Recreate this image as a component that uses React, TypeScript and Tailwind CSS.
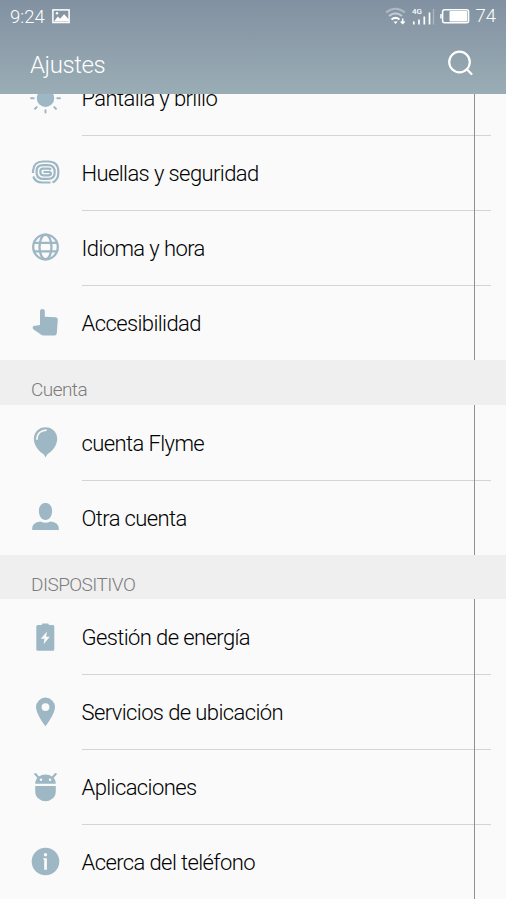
import type { ReactNode } from "react";

interface SettingItem {
  label: string;
  icon: ReactNode;
}

interface SettingSection {
  title?: string;
  titleClass?: string;
  items: SettingItem[];
}

const sections: SettingSection[] = [
  {
    items: [
      {
        label: "Pantalla y brillo",
        icon: (
          <>
            <circle cx="16.5" cy="17.2" r="8.7" fill="currentColor" />
            <path
              d="M2 17.3h2.7M28.3 17.3h2.7M6.1 27.7l1.6-1.6M26.9 27.7l-1.6-1.6M16.5 29.2v2.4M6.1 6.8l1.6 1.6M26.9 6.8l-1.6 1.6M16.5 5.2v-2.4"
              stroke="currentColor"
              strokeWidth="2"
              strokeLinecap="round"
            />
          </>
        ),
      },
      {
        label: "Huellas y seguridad",
        icon: (
          <g fill="none" stroke="currentColor" strokeWidth="2.2">
            <path d="M4 17V15Q4.5 5.5 14 5.5H19Q29.3 5.5 29.3 15.5V17Q29.3 24 23.5 26.5" />
            <path d="M4.2 20.5Q6.500 26.500 13 26.500H21.500" />
            <path d="M7.600 17.500Q8.500 22.900 14 22.900H19Q25.700 22.900 25.700 16.200Q25.700 9.200 19 9.200H14Q7.600 9.200 7.600 15V17.500" />
            <path d="M22 13.800Q21 12.700 19 12.700H14Q11.300 12.700 11.300 15.500Q11.300 19.300 14.500 19.300H19Q22 19.300 22 17.500Q22 16 20 16H14.500" />
          </g>
        ),
      },
      {
        label: "Idioma y hora",
        icon: (
          <g fill="none" stroke="currentColor" strokeWidth="2.3">
            <circle cx="16.5" cy="16" r="12.3" />
            <ellipse cx="16.5" cy="16" rx="6" ry="12.3" />
            <path d="M5.3 11.9h22.4M5.3 20.3h22.4" />
          </g>
        ),
      },
      {
        label: "Accesibilidad",
        icon: (
          <path
            d="M11 19V5.3a2.4 2.4 0 0 1 4.8 0v5.5l11 .5q2 .2 2 2.2l-1 13.8q-.2 2.2-2.3 2.2H14.5q-1.5 0-2.6-1.1L4.6 23.6q-1.3-1.2-.9-2.5.6-1.4 2.5-1.4z"
            fill="currentColor"
          />
        ),
      },
    ],
  },
  {
    title: "Cuenta",
    titleClass: "h-[45px] pb-px",
    items: [
      {
        label: "cuenta Flyme",
        icon: (
          <>
            <path
              d="M16.5 1.2c6.7 0 11.7 4.9 11.7 11.5 0 6.8-4.7 12.3-9.9 15.5l-1.8 3.3-1.8-3.3C9.5 25 4.9 19.5 4.9 12.7 4.9 6.1 9.8 1.2 16.5 1.2z"
              fill="currentColor"
            />
            <path
              d="M7.9 13C8 8 11.5 4.5 17 4.1"
              fill="none"
              stroke="#fafafa"
              strokeWidth="1.8"
              strokeLinecap="round"
            />
          </>
        ),
      },
      {
        label: "Otra cuenta",
        icon: (
          <path
            d="M16.5 2c4 0 6.600 3.100 6.600 8 0 4.800-2.700 9-6.600 9s-6.600-4.200-6.600-9c0-4.900 2.600-8 6.600-8zM3.200 29v-1.500q0-6 8.300-7 2.500 1.200 5 1.200t5-1.200q8.300 1 8.300 7V29z"
            fill="currentColor"
          />
        ),
      },
    ],
  },
  {
    title: "DISPOSITIVO",
    titleClass: "h-[44px]",
    items: [
      {
        label: "Gestión de energía",
        icon: (
          <>
            <path
              d="M8.8 4.9h4V4.5q0-1 1-1h5q1 0 1 1v.4h4q1.5 0 1.5 1.5v22.9q0 1.5-1.5 1.5H8.8q-1.5 0-1.5-1.5V6.4q0-1.5 1.5-1.5z"
              fill="currentColor"
            />
            <path d="M18 11.5l-6.2 7.3h3.7l-.9 5.4 6.2-7.4h-3.7z" fill="#fafafa" />
          </>
        ),
      },
      {
        label: "Servicios de ubicación",
        icon: (
          <path
            fillRule="evenodd"
            d="M16.5 2.6a9.5 9.5 0 0 1 9.5 9.5c0 7-9.5 19.2-9.5 19.2S7 19.1 7 12.1a9.5 9.5 0 0 1 9.500-9.500zm0 5.600a3.900 3.900 0 1 0 0 7.800 3.900 3.900 0 0 0 0-7.800z"
            fill="currentColor"
          />
        ),
      },
      {
        label: "Aplicaciones",
        icon: (
          <>
            <path d="M6.2 13.8q.1-4.600 3.400-7Q12.500 4.500 16.500 4.500t6.900 2.300q3.300 2.400 3.400 7z" fill="currentColor" />
            <path d="M9.500 7.500L6.300 4.100M23.500 7.500l3.200-3.400" stroke="currentColor" strokeWidth="2.2" strokeLinecap="round" />
            <circle cx="12" cy="9.800" r="1.2" fill="#fafafa" />
            <circle cx="21" cy="9.800" r="1.2" fill="#fafafa" />
            <path d="M6.200 16h20.600v5q0 5.700-4 8-2.500 2.300-6.300 2.300t-6.300-2.300q-4-2.300-4-8z" fill="currentColor" />
          </>
        ),
      },
      {
        label: "Acerca del teléfono",
        icon: (
          <>
            <circle cx="16.5" cy="16.5" r="13.8" fill="currentColor" />
            <circle cx="16.5" cy="9.7" r="1.7" fill="#fafafa" />
            <path d="M14.300 13.300h3.600v11.500h-2.700v-10.200h-.9z" fill="#fafafa" />
          </>
        ),
      },
    ],
  },
];

const StatusBar = () => (
  <div className="flex h-8 items-center pl-[10px] pr-[10px] text-[18.5px] leading-8">
    <span className="pt-px">9:24</span>
    <svg className="ml-[7px] h-4 w-[18px]" viewBox="0 0 18 16" fill="none">
      <rect x="0.9" y="1.9" width="16.2" height="12.6" stroke="white" strokeWidth="1.5" />
      <path d="M2 13.5l3.8-5 2.3 2.2 4-4.5 4.7 5v2.3z" fill="white" />
      <circle cx="5" cy="5.2" r="1.2" fill="white" />
    </svg>
    <div className="flex-1" />
    <svg className="h-5 w-[22px]" viewBox="0 0 22 20" fill="none" stroke="white">
      <path d="M1 6.5Q10.5 -1 20 6.5" strokeOpacity="0.35" strokeWidth="2" />
      <path d="M4 10Q10.5 4.8 17 10" strokeOpacity="0.5" strokeWidth="2" />
      <path d="M6.5 13.5Q10.5 10.3 14.5 13.5" strokeWidth="2" />
      <path d="M8.5 15.5h4.2L10.600 18z" fill="white" stroke="none" />
      <path d="M17.7 12.5v5M15.7 15.5l2 2 2-2" strokeWidth="1.5" />
    </svg>
    <svg className="ml-[5px] h-5 w-[23px]" viewBox="0 0 23 20">
      <text x="0" y="7.8" fontSize="8" fontFamily="Roboto, sans-serif" fontWeight="500" fill="white">4G</text>
      <path d="M1.8 15.5v3M7 13.5v5M12.3 10.5v8M17.5 6.5v12" stroke="white" strokeWidth="1.7" />
      <path d="M21.5 3v15.5" stroke="white" strokeOpacity="0.3" strokeWidth="1.5" />
    </svg>
    <svg className="ml-[5px] h-4 w-[30px]" viewBox="0 0 30 16" fill="none">
      <rect x="2.6" y="1.7" width="26" height="13" rx="2" stroke="white" strokeWidth="1.5" />
      <rect x="9.5" y="3" width="17.8" height="10.5" rx="1" fill="white" />
      <path d="M1 6v4.5" stroke="white" strokeWidth="1.5" />
    </svg>
    <span className="ml-[5px]">74</span>
  </div>
);

const SettingRow = ({ item, first }: { item: SettingItem; first: boolean }) => (
  <div className="flex h-[75px] items-center pl-[29px] pr-[15px]">
    <svg className="h-[33px] w-[33px] shrink-0 text-[#9eb7c4]" viewBox="0 0 33 33">
      {item.icon}
    </svg>
    <div
      className={`ml-[19.5px] flex h-full flex-1 items-center border-t text-[22px] font-[350] tracking-[-0.6px] text-black ${
        first ? "border-transparent" : "border-[#d4d4d4]"
      }`}
    >
      {item.label}
    </div>
  </div>
);

export default function App() {
  return (
    <div className="flex h-[899px] w-[506px] flex-col overflow-hidden bg-[#fafafa] font-['Roboto',sans-serif] font-light">
      <header className="h-[94px] shrink-0 bg-gradient-to-b from-[#8291a1] to-[#9aadb5] text-white">
        <StatusBar />
        <div className="flex h-[62px] items-center justify-between pl-[30px] pr-8">
          <h1 className="pt-[3px] text-[24px] tracking-[-0.4px]">Ajustes</h1>
          <svg className="h-7 w-7" viewBox="0 0 28 28" fill="none" stroke="white" strokeWidth="2.2">
            <circle cx="13.5" cy="13" r="10.3" />
            <path d="M20.8 20.3l4.7 4.7" strokeLinecap="round" />
          </svg>
        </div>
      </header>
      <main className="min-h-0 flex-1 overflow-hidden">
        {/* list is scrolled a little, so the first row is half hidden */}
        <div className="-mt-[34px]">
          {sections.map((section, i) => (
            <section key={i}>
              {section.title && (
                <h2
                  className={`flex items-end bg-[#efefef] pl-[31px] text-[19px] leading-[28px] tracking-[-0.55px] text-[#7c7c7c] ${section.titleClass}`}
                >
                  {section.title}
                </h2>
              )}
              <div className="relative">
                {section.items.map((item, n) => (
                  <SettingRow key={item.label} item={item} first={n === 0} />
                ))}
                {/* side rail running down each group */}
                <div className="absolute inset-y-0 left-[474px] w-px bg-[#8f8f8f]" />
              </div>
            </section>
          ))}
        </div>
      </main>
    </div>
  );
}
